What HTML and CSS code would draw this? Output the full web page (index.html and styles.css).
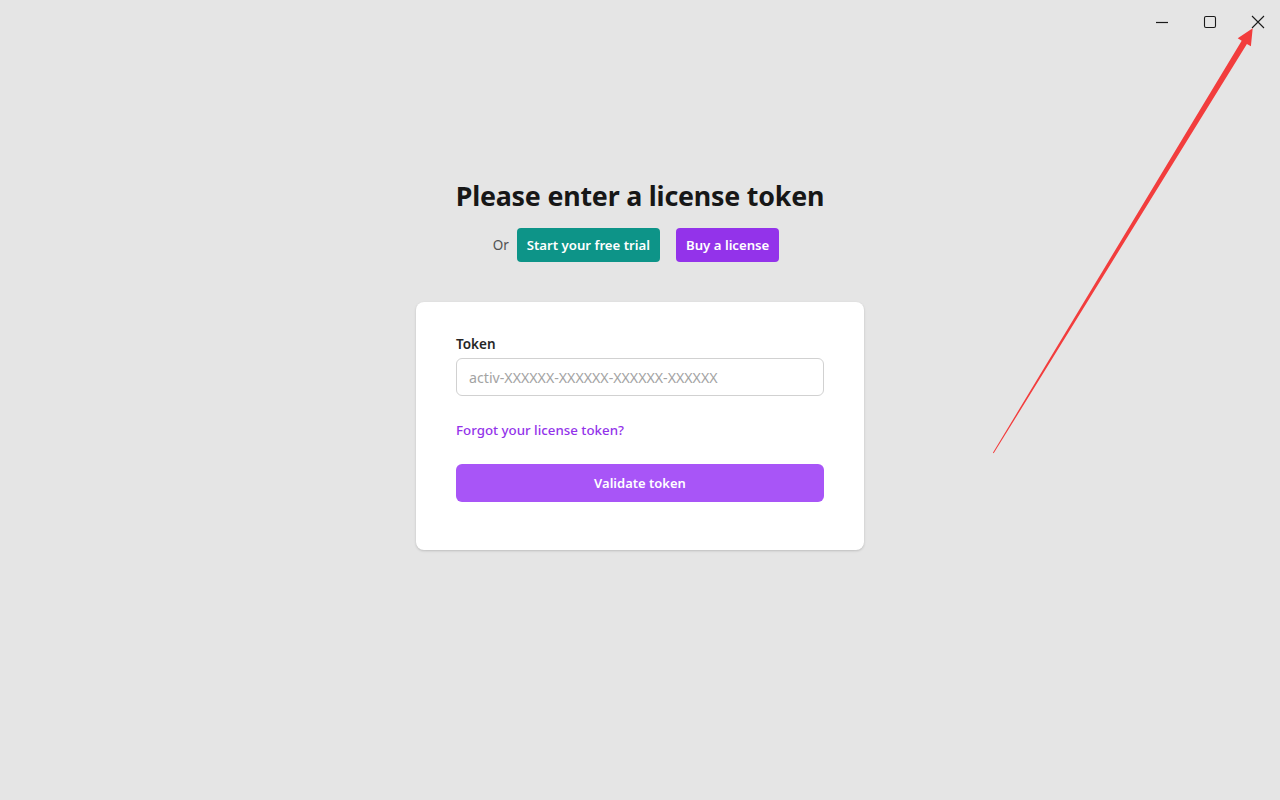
FILE: index.html
```html
<!doctype html>
<html lang="en">
    <head>
        <meta charset="utf-8">
        <title>License</title>
        <link rel="stylesheet" href="styles.css">
    </head>
    <body>
        <div class="titlebar">
            <button class="win-btn" aria-label="Minimize">
                <svg width="14" height="14" viewBox="0 0 14 14"><path d="M1 7.5h12" stroke="#1a1a1a" stroke-width="1.2"/></svg>
            </button>
            <button class="win-btn" aria-label="Maximize">
                <svg width="14" height="14" viewBox="0 0 14 14"><rect x="1.5" y="1.5" width="11" height="11" rx="1.5" fill="none" stroke="#1a1a1a" stroke-width="1.1"/></svg>
            </button>
            <button class="win-btn" aria-label="Close">
                <svg width="14" height="14" viewBox="0 0 14 14"><path d="M1 1l12 12M13 1L1 13" stroke="#1a1a1a" stroke-width="1.1"/></svg>
            </button>
        </div>

        <div id="container">
            <h1 class="heading">Please enter a license token</h1>
            <div class="alt-actions">
                <span class="or">Or</span>
                <a href="#" class="pill trial">Start your free trial</a>
                <a href="#" class="pill buy">Buy a license</a>
            </div>

            <form class="card">
                <label for="token" class="field-label">Token</label>
                <input id="token" type="text" class="field" placeholder="activ-XXXXXX-XXXXXX-XXXXXX-XXXXXX">
                <a href="#" class="forgot">Forgot your license token?</a>
                <button type="button" class="validate">Validate token</button>
            </form>
        </div>

        <!-- annotation arrow pointing at the close button -->
        <svg class="annotation" width="1280" height="800" viewBox="0 0 1280 800">
            <polygon fill="#f23d3d" points="993.7,453.3 1246.9,43.9 1250.9,46.3 1252.7,28.3 1237.7,38.3 1241.7,40.7 992.9,452.7"/>
        </svg>
    </body>
</html>
```

FILE: styles.css
```css
html, body{
    margin: 0px;
    padding: 0px;
    width: 100%;
    height: 100%;
    background-color: #e5e5e5;
}
body{
    font-family: "Noto Sans", "Open Sans", sans-serif;
    color: #1a1a1a;
    position: relative;
    overflow: hidden;
}
.titlebar{
    display: flex;
    justify-content: flex-end;
    height: 44px;
    margin-right: -2px;
}
.win-btn{
    width: 48px;
    height: 44px;
    border: none;
    background: transparent;
    padding: 0;
    display: flex;
    align-items: center;
    justify-content: center;
}
#container{
    width: 448px;
    margin: 0 auto;
    padding-top: 132px;
    display: flex;
    flex-direction: column;
    align-items: center;
}
.heading{
    margin: 0;
    font-size: 26.8px;
    font-weight: 700;
    line-height: 40px;
    color: #171717;
    letter-spacing: -0.2px;
}
.alt-actions{
    display: flex;
    align-items: center;
    margin-top: 12px;
    padding-right: 8px;
}
.or{
    font-size: 13.5px;
    color: #525252;
    margin-right: 8px;
}
.pill{
    display: inline-flex;
    align-items: center;
    height: 34px;
    padding: 0 10px;
    border-radius: 4px;
    color: #fff;
    font-size: 13.2px;
    font-weight: 600;
    text-decoration: none;
}
.trial{
    background: #0d9488;
}
.buy{
    background: #9333ea;
    margin-left: 16px;
}
.card{
    box-sizing: border-box;
    width: 448px;
    margin-top: 40px;
    padding: 32px 40px 48px 40px;
    background: #fff;
    border-radius: 8px;
    box-shadow: 0 1px 3px rgba(0,0,0,0.12), 0 1px 2px rgba(0,0,0,0.06);
    display: flex;
    flex-direction: column;
}
.field-label{
    font-size: 13.5px;
    font-weight: 600;
    color: #262626;
    line-height: 20px;
}
.field{
    box-sizing: border-box;
    margin-top: 4px;
    height: 38px;
    padding: 0 12px;
    border: 1px solid #d1d1d1;
    border-radius: 6px;
    font-family: inherit;
    font-size: 14.2px;
    color: #262626;
    outline: none;
}
.field::placeholder{
    color: #a3a3a3;
}
.forgot{
    margin-top: 24px;
    font-size: 13.3px;
    font-weight: 500;
    color: #9333ea;
    text-decoration: none;
    line-height: 20px;
}
.validate{
    margin-top: 24px;
    height: 38px;
    border: none;
    border-radius: 6px;
    background: #a855f7;
    color: #fff;
    font-family: inherit;
    font-size: 13px;
    font-weight: 600;
    cursor: pointer;
}
.annotation{
    position: absolute;
    left: 0;
    top: 0;
    pointer-events: none;
}
```
